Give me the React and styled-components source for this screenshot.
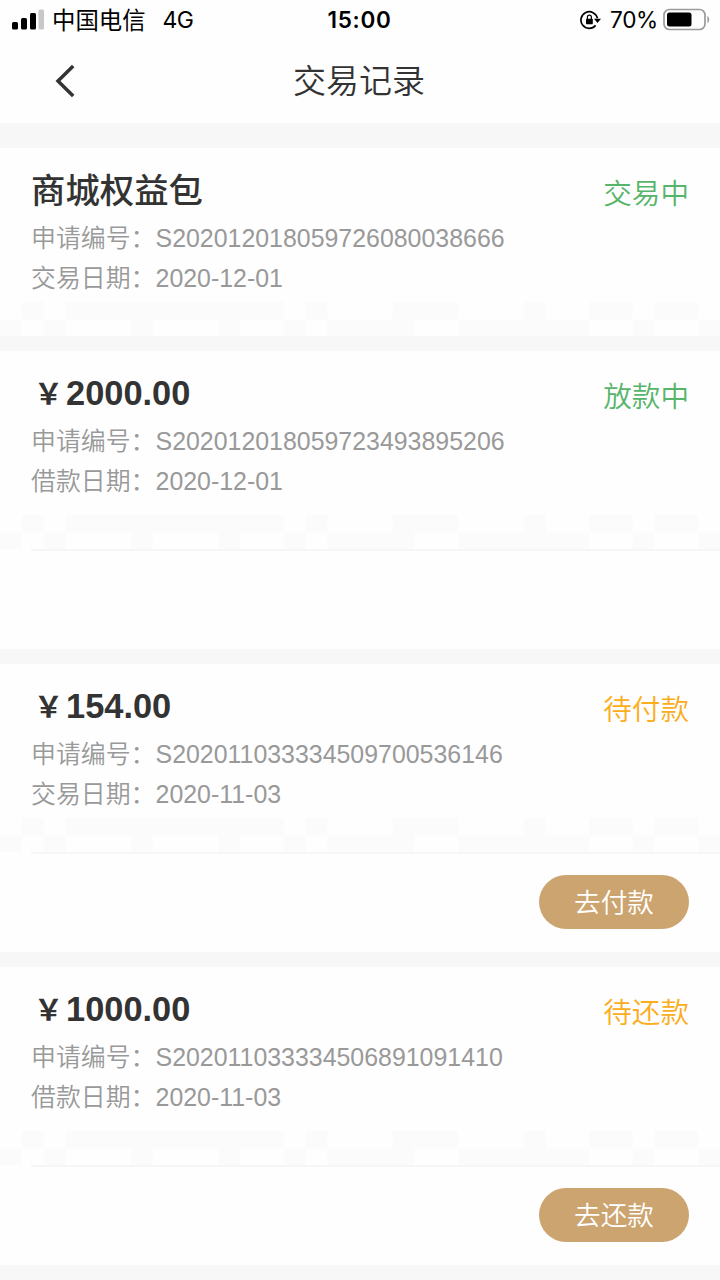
import styled, { createGlobalStyle } from "styled-components";

const GlobalStyle = createGlobalStyle`
  * {
    box-sizing: border-box;
  }
  body {
    margin: 0;
    background-color: #f7f7f7;
    font-family: "Liberation Sans", "Noto Sans CJK SC", sans-serif;
    color: #333;
  }
`;

const Container = styled.div`
  width: 720px;
  height: 1280px;
  overflow: hidden;
  background-color: #f7f7f7;
`;

const Top = styled.div`
  height: 123px;
  margin-bottom: 25px;
  background-color: #fefefe;
`;

const StatusBar = styled.div`
  height: 40px;
  padding: 0 10px 0 12px;
  display: grid;
  grid-template-columns: 1fr auto 1fr;
  grid-template-rows: 39px;
  align-items: center;
  color: #000;
  font-family: Inter, "Noto Sans CJK SC", sans-serif;
  font-size: 22px;
  line-height: 38px;
`;

const Left = styled.div`
  display: flex;
  align-items: center;
`;

const Right = styled.div`
  display: flex;
  align-items: center;
  justify-content: flex-end;
`;

const Carrier = styled.span`
  margin: 0 17px 0 7px;
  padding-top: 2px;
  font-size: 23.4px;
`;

const Network = styled.span`
  font-size: 23px;
  letter-spacing: -0.6px;
`;

const Clock = styled.span`
  margin-right: 3px;
  font-size: 22.5px;
  font-weight: 600;
  letter-spacing: 0.7px;
`;

const Percent = styled.span`
  margin: 0 5px 0 9px;
  font-size: 22.6px;
  letter-spacing: -0.3px;
`;

const Header = styled.div`
  height: 83px;
  padding: 0 57px 0 55px;
  display: grid;
  grid-template-columns: 22px 1fr 22px;
  align-items: center;
`;

const PageTitle = styled.h1`
  margin: 0;
  padding-top: 1px;
  font-size: 33px;
  font-weight: 350;
  line-height: 82px;
  text-align: center;
`;

const Card = styled.div`
  margin-bottom: 15px;
  background-color: #fefefe;
`;

const Info = styled.div`
  height: ${(props) => props.$height}px;
  display: flex;
  flex-direction: column;
  justify-content: space-between;
`;

const Summary = styled.div`
  padding: 18px 31px 0;
  display: flex;
  justify-content: space-between;
`;

const Name = styled.h2`
  margin: 0 0 4px;
  padding-top: ${(props) => (props.$amount ? 0 : 2)}px;
  font-size: 34.4px;
  font-weight: ${(props) => (props.$amount ? 700 : 500)};
  line-height: ${(props) => (props.$amount ? 48 : 46)}px;
  white-space: nowrap;
`;

const Yen = styled.span`
  display: inline-block;
  width: 35px;
  font-size: 29px;
  line-height: 40px;
  text-align: center;
`;

const Detail = styled.p`
  margin: 0;
  font-size: 24.92px;
  font-weight: 350;
  line-height: 40px;
  color: #999;
  white-space: nowrap;
`;

const State = styled.span`
  padding-top: 2px;
  font-size: 28.6px;
  font-weight: 350;
  line-height: 52px;
  color: ${(props) => (props.$pending ? "#fbad1c" : "#56b56a")};
`;

const Footer = styled.div`
  height: 100px;
  margin-left: 31px;
  padding: 0 31px 2px 0;
  border-top: 2px solid #f6f6f6;
  display: flex;
  align-items: center;
  justify-content: flex-end;
`;

const Button = styled.button`
  width: 150px;
  height: 54px;
  padding: 0;
  border: none;
  border-radius: 27px;
  background-color: #cca470;
  color: white;
  font-family: inherit;
  font-size: 26.6px;
  font-weight: 350;
  line-height: 56px;
`;

// [column, row, length] on a 33 x 2 grid
const cells = [
  [1, 0, 1], [3, 0, 10], [14, 0, 1], [18, 0, 3], [24, 0, 1], [27, 0, 2], [30, 0, 2],
  [0, 1, 1], [2, 1, 1], [6, 1, 1], [10, 1, 1], [13, 1, 1], [15, 1, 4], [21, 1, 6], [29, 1, 1], [32, 1, 1],
];

const Mosaic = () => (
  <svg width="720" height="34.5" viewBox="0 0 33 2" preserveAspectRatio="none" fill="#fbfbfb">
    {cells.map(([x, y, w]) => (
      <rect key={`${x}-${y}`} x={x} y={y} width={w} height="1" />
    ))}
  </svg>
);

const Signal = () => (
  <svg width="33" height="22" viewBox="0 0 33 22">
    <rect x="0" y="13" width="6" height="7.5" rx="1.5" />
    <rect x="9" y="9" width="6" height="11.5" rx="1.5" />
    <rect x="18" y="4" width="6" height="16.5" rx="1.5" />
    <rect x="26.5" y="0.5" width="5.5" height="20" rx="1.5" fill="#c8c8c8" />
  </svg>
);

const RotationLock = () => (
  <svg width="21" height="20" viewBox="0 0 21 20">
    <path d="M15.6 15.4A8.3 8.3 0 1 1 17.4 8.4" fill="none" stroke="#000" strokeWidth="1.7" />
    <path d="M14 8.7h7l-3.5 4.4z" />
    <rect x="6" y="8.8" width="6.8" height="5.4" rx="0.8" />
    <path d="M7.4 9V7.2a2 2 0 0 1 4 0V9" fill="none" stroke="#000" strokeWidth="1.2" />
  </svg>
);

const Battery = () => (
  <svg width="47" height="24" viewBox="0 0 47 24">
    <rect x="1" y="1.5" width="41" height="20" rx="5.5" fill="none" stroke="#9b9b9b" strokeWidth="1.7" />
    <rect x="4" y="4.5" width="24.5" height="14" rx="2.5" />
    <path d="M44.4 8c2.4 1 2.4 6 0 7z" fill="#9b9b9b" />
  </svg>
);

const Back = () => (
  <svg width="22" height="36" viewBox="0 0 22 36">
    <path d="M18.2 2L3 17l15.2 15" fill="none" stroke="#333" strokeWidth="3.5" />
  </svg>
);

const records = [
  {
    name: "商城权益包",
    number: "S202012018059726080038666",
    dateLabel: "交易日期",
    date: "2020-12-01",
    state: "交易中",
    height: 188,
  },
  {
    name: "2000.00",
    amount: true,
    number: "S202012018059723493895206",
    dateLabel: "借款日期",
    date: "2020-12-01",
    state: "放款中",
    height: 198,
    footer: true,
  },
  {
    name: "154.00",
    amount: true,
    number: "S202011033334509700536146",
    dateLabel: "交易日期",
    date: "2020-11-03",
    state: "待付款",
    pending: true,
    height: 188,
    footer: true,
    action: "去付款",
  },
  {
    name: "1000.00",
    amount: true,
    number: "S202011033334506891091410",
    dateLabel: "借款日期",
    date: "2020-11-03",
    state: "待还款",
    pending: true,
    height: 198,
    footer: true,
    action: "去还款",
  },
];

const Record = ({ item }) => {
  return (
    <Card>
      <Info $height={item.height}>
        <Summary>
          <div>
            <Name $amount={item.amount}>
              {item.amount && <Yen>{"\uFFE5"}</Yen>}
              {item.name}
            </Name>
            <Detail>{`申请编号\uFF1A${item.number}`}</Detail>
            <Detail>{`${item.dateLabel}\uFF1A${item.date}`}</Detail>
          </div>
          <State $pending={item.pending}>{item.state}</State>
        </Summary>
        <Mosaic />
      </Info>
      {item.footer && <Footer>{item.action && <Button>{item.action}</Button>}</Footer>}
    </Card>
  );
};

const App = () => {
  return (
    <Container>
      <GlobalStyle />
      <Top>
        <StatusBar>
          <Left>
            <Signal />
            <Carrier>中国电信</Carrier>
            <Network>4G</Network>
          </Left>
          <Clock>15:00</Clock>
          <Right>
            <RotationLock />
            <Percent>70%</Percent>
            <Battery />
          </Right>
        </StatusBar>
        <Header>
          <Back />
          <PageTitle>交易记录</PageTitle>
        </Header>
      </Top>
      {records.map((item) => (
        <Record item={item} key={item.number} />
      ))}
    </Container>
  );
};

export default App;
